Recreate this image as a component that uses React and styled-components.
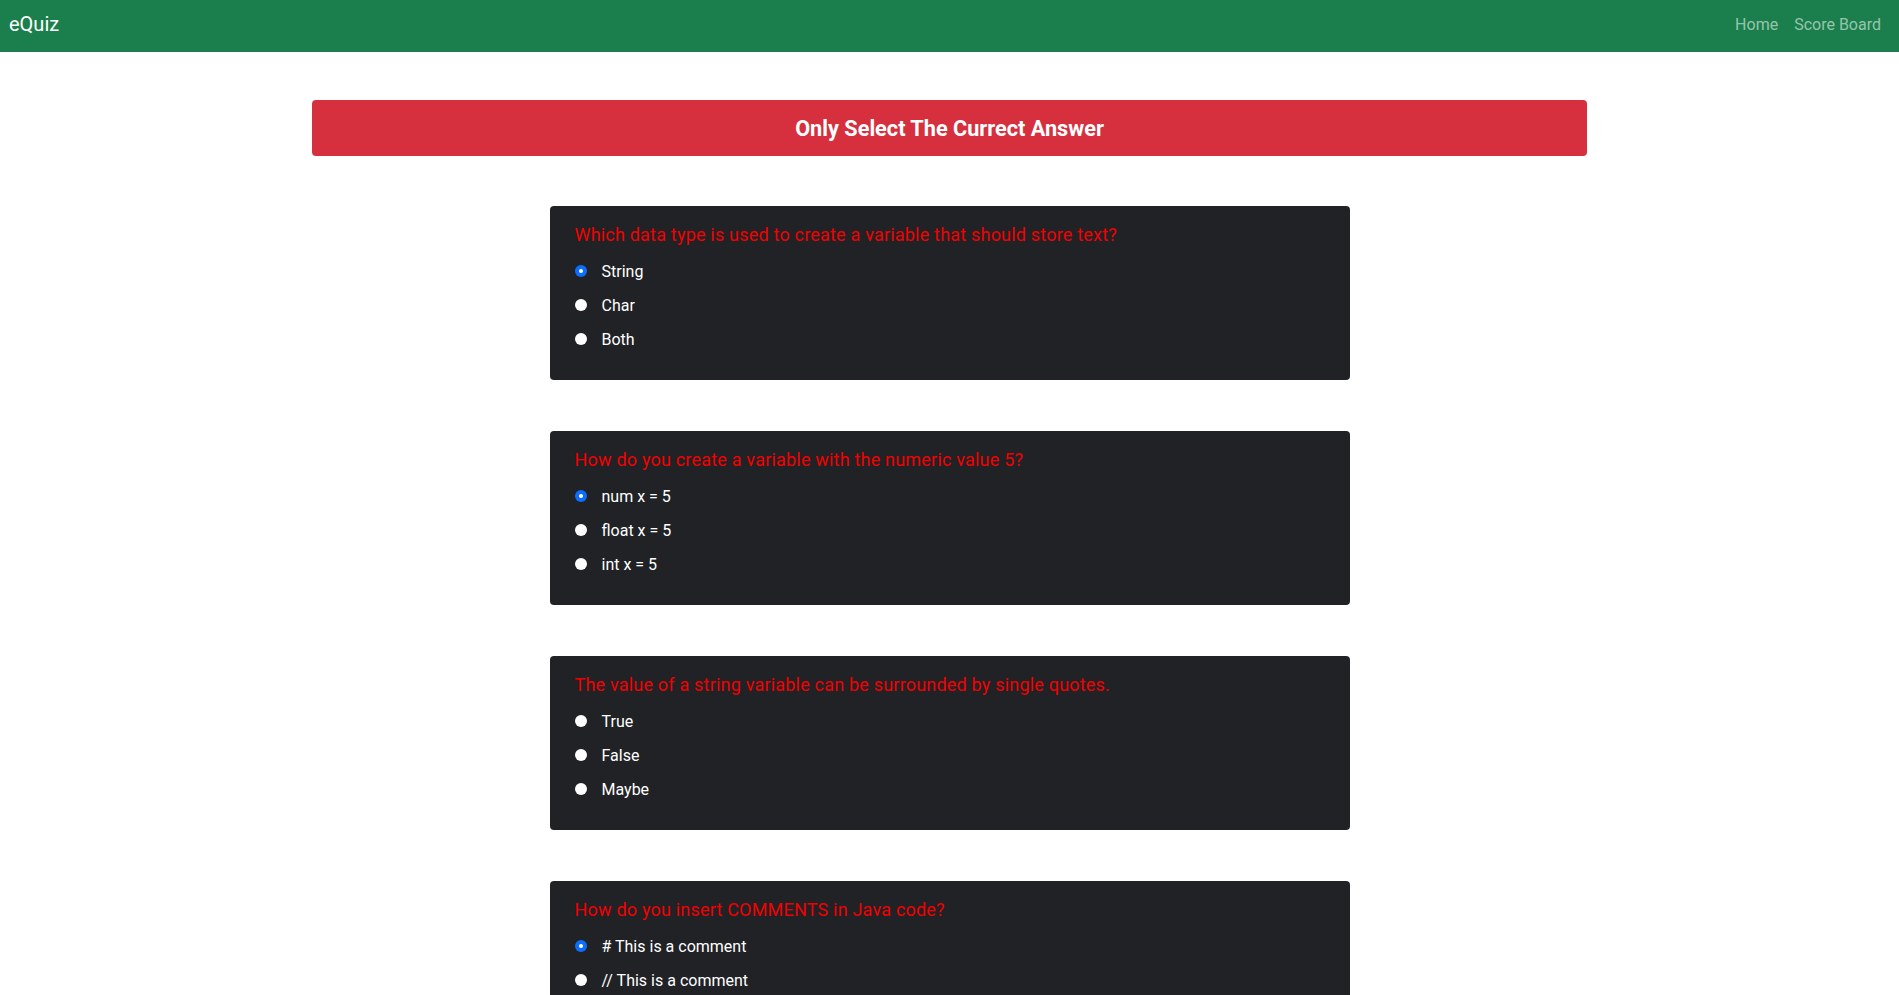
import React, { useState } from "react";
import styled, { createGlobalStyle } from "styled-components";

const Global = createGlobalStyle`
  html, body { margin: 0; padding: 0; background: #fff; }
  body { font-family: Roboto, "Liberation Sans", Arial, sans-serif; }
  * { box-sizing: border-box; }
`;

const Nav = styled.nav`
  height: 52px;
  background: #1a7f4c;
  display: flex;
  align-items: center;
  justify-content: space-between;
  padding: 0 10px 0 9px;
`;

const Brand = styled.a`
  color: #fff;
  font-size: 20px;
  text-decoration: none;
  line-height: 1;
  margin-top: -4px;
`;

const Links = styled.div`
  display: flex;
  align-items: center;
  margin-top: -4px;
`;

const NavLink = styled.a`
  color: rgba(255, 255, 255, 0.55);
  font-size: 16px;
  text-decoration: none;
  padding: 0 8px;
`;

const Main = styled.main`
  display: flex;
  flex-direction: column;
  align-items: center;
  padding-top: 48px;
`;

const Banner = styled.div`
  width: 1275px;
  height: 56px;
  background: #d62f3e;
  border-radius: 4px;
  color: #fff;
  font-size: 21.7px;
  font-weight: 700;
  display: flex;
  align-items: center;
  justify-content: center;
  margin-bottom: 50px;
`;

const Card = styled.section`
  width: 800px;
  background: #202226;
  border-radius: 4px;
  padding: 18px 20px 24px 25px;
  margin-bottom: 51px;
`;

const Question = styled.h3`
  margin: 0 0 8px;
  color: #f20000;
  font-size: 18px;
  letter-spacing: 0.2px;
  font-weight: 400;
  line-height: 22px;
`;

const Option = styled.label`
  display: flex;
  align-items: center;
  height: 34px;
  color: #fff;
  font-size: 16px;
  cursor: pointer;
`;

const Radio = styled.span`
  width: 12px;
  height: 12px;
  border-radius: 50%;
  background: ${(p) => (p.$checked ? "#0d6efd" : "#fff")};
  margin-right: 15px;
  display: flex;
  align-items: center;
  justify-content: center;
  flex-shrink: 0;
  &::after {
    content: "";
    width: 4px;
    height: 4px;
    border-radius: 50%;
    background: #fff;
    display: ${(p) => (p.$checked ? "block" : "none")};
  }
`;

const questions = [
  {
    q: "Which data type is used to create a variable that should store text?",
    options: ["String", "Char", "Both"],
    sel: 0,
  },
  {
    q: "How do you create a variable with the numeric value 5?",
    options: ["num x = 5", "float x = 5", "int x = 5"],
    sel: 0,
  },
  {
    q: "The value of a string variable can be surrounded by single quotes.",
    options: ["True", "False", "Maybe"],
    sel: -1,
  },
  {
    q: "How do you insert COMMENTS in Java code?",
    options: ["# This is a comment", "// This is a comment", "/* This is a comment"],
    sel: 0,
  },
];

function QuestionCard({ item }) {
  const [sel, setSel] = useState(item.sel);
  return (
    <Card>
      <Question>{item.q}</Question>
      {item.options.map((o, i) => (
        <Option key={o} onClick={() => setSel(i)}>
          <Radio $checked={sel === i} />
          {o}
        </Option>
      ))}
    </Card>
  );
}

export default function App() {
  return (
    <>
      <Global />
      <Nav>
        <Brand href="#">eQuiz</Brand>
        <Links>
          <NavLink href="#">Home</NavLink>
          <NavLink href="#">Score Board</NavLink>
        </Links>
      </Nav>
      <Main>
        <Banner>Only Select The Currect Answer</Banner>
        {questions.map((q) => (
          <QuestionCard key={q.q} item={q} />
        ))}
      </Main>
    </>
  );
}
